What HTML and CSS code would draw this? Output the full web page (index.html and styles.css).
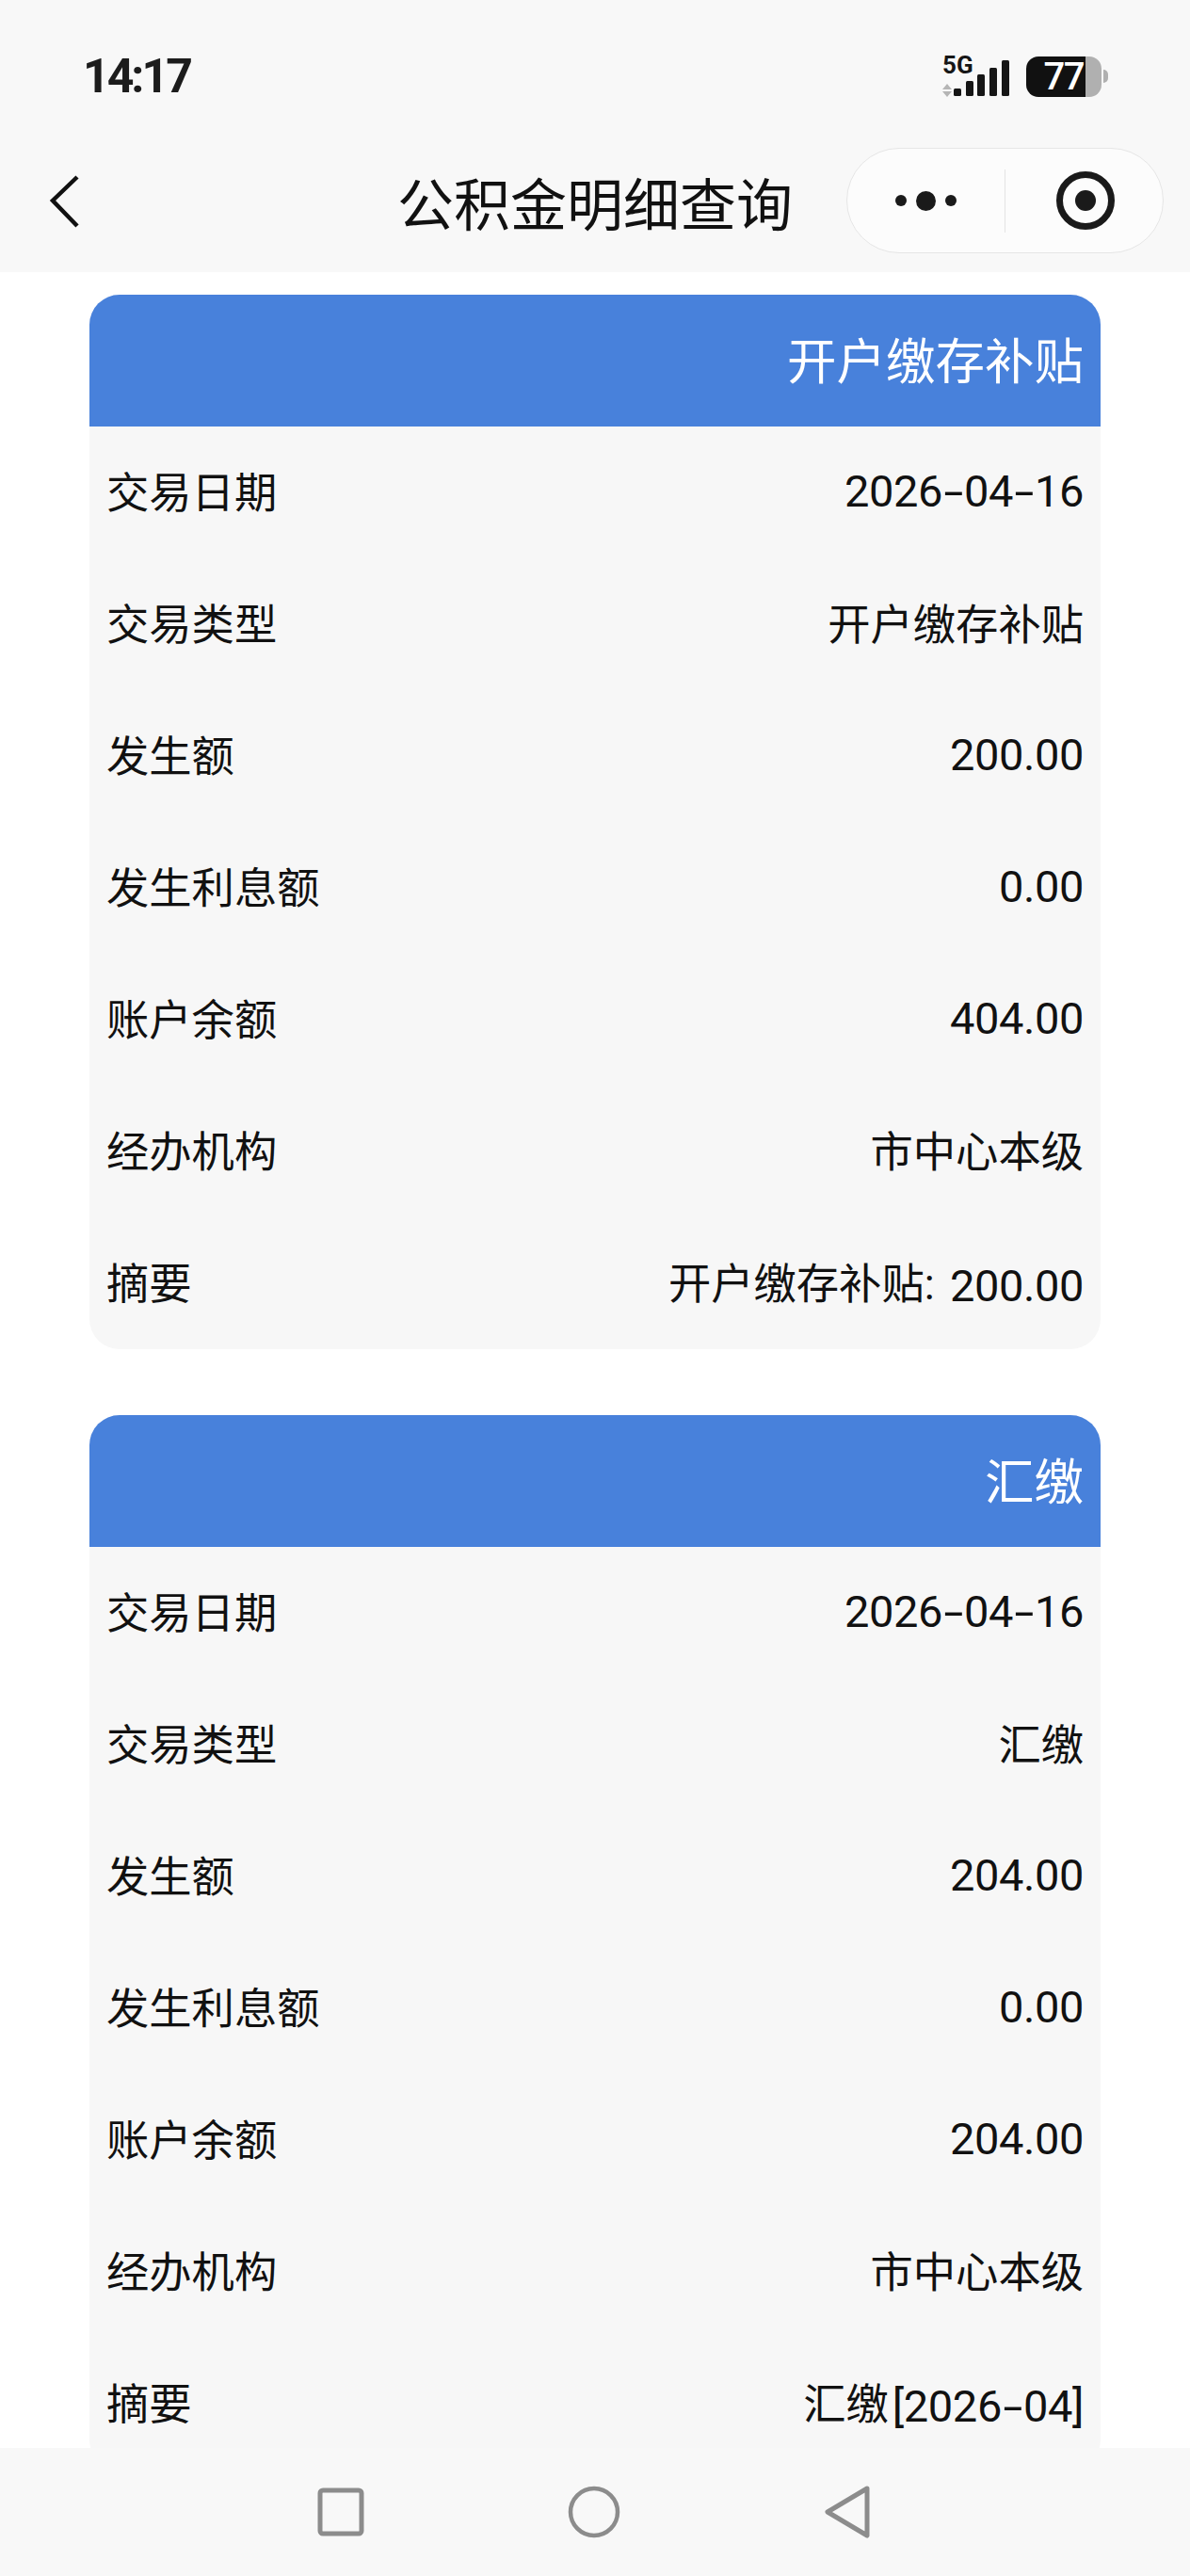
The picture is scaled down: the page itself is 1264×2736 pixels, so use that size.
FILE: index.html
```html
<!DOCTYPE html>
<html lang="zh-CN">
<head>
    <meta charset="UTF-8">
    <meta name="viewport" content="width=device-width, initial-scale=1.0">
    <title>公积金明细查询</title>
    <link rel="stylesheet" href="styles.css">
</head>
<body>
    <header class="top">
        <div class="status-bar">
            <span class="time">14:17</span>
            <div class="status-icons">
                <div class="signal">
                    <span class="net">5G</span>
                    <svg class="signal-svg" width="71" height="43" viewBox="0 0 71 43">
                        <path d="M0 35 5 29 10 35ZM0 37 5 43 10 37Z" fill="#b5b5b5"/>
                        <rect x="12" y="34" width="8" height="8" rx="1.500" fill="#161616"/>
                        <rect x="25" y="26" width="8" height="16" rx="1.500" fill="#161616"/>
                        <rect x="37" y="19" width="8" height="23" rx="1.500" fill="#161616"/>
                        <rect x="50" y="12" width="8" height="30" rx="1.500" fill="#161616"/>
                        <rect x="63" y="4" width="8" height="38" rx="1.500" fill="#161616"/>
                    </svg>
                </div>
                <div class="battery">
                    <div class="battery-body">
                        <span class="battery-level">77</span>
                    </div>
                    <span class="battery-cap"></span>
                </div>
            </div>
        </div>
        <nav class="nav-bar">
            <svg class="back" width="34" height="58" viewBox="0 0 34 58">
                <path d="M31 3 5 28 31 55" fill="none" stroke="#111" stroke-width="4.500"/>
            </svg>
            <h1 class="nav-title">公积金明细查询</h1>
            <div class="capsule">
                <div class="capsule-more">
                    <span class="dot"></span>
                    <span class="dot dot-big"></span>
                    <span class="dot"></span>
                </div>
                <div class="capsule-close">
                    <span class="target"></span>
                </div>
            </div>
        </nav>
    </header>

    <main class="content">
        <section class="card">
            <h2 class="card-title">开户缴存补贴</h2>
            <div class="row"><span>交易日期</span><span class="num">2026<span class="dash">-</span>04<span class="dash">-</span>16</span></div>
            <div class="row"><span>交易类型</span><span>开户缴存补贴</span></div>
            <div class="row"><span>发生额</span><span class="num">200.00</span></div>
            <div class="row"><span>发生利息额</span><span class="num">0.00</span></div>
            <div class="row"><span>账户余额</span><span class="num">404.00</span></div>
            <div class="row"><span>经办机构</span><span>市中心本级</span></div>
            <div class="row"><span>摘要</span><span class="note">开户缴存补贴: <span class="num">200.00</span></span></div>
        </section>

        <section class="card">
            <h2 class="card-title">汇缴</h2>
            <div class="row"><span>交易日期</span><span class="num">2026<span class="dash">-</span>04<span class="dash">-</span>16</span></div>
            <div class="row"><span>交易类型</span><span>汇缴</span></div>
            <div class="row"><span>发生额</span><span class="num">204.00</span></div>
            <div class="row"><span>发生利息额</span><span class="num">0.00</span></div>
            <div class="row"><span>账户余额</span><span class="num">204.00</span></div>
            <div class="row"><span>经办机构</span><span>市中心本级</span></div>
            <div class="row"><span>摘要</span><span>汇缴<span class="num num-bracket">[2026<span class="dash">-</span>04]</span></span></div>
        </section>
    </main>

    <footer class="sys-nav">
        <svg width="50" height="52" viewBox="0 0 50 52">
            <rect x="3" y="3" width="44" height="46" rx="3" fill="none" stroke="#8c8c8c" stroke-width="5"/>
        </svg>
        <svg width="56" height="56" viewBox="0 0 56 56">
            <circle cx="28" cy="28" r="25" fill="none" stroke="#8c8c8c" stroke-width="4.500"/>
        </svg>
        <svg width="50" height="58" viewBox="0 0 50 58">
            <path d="M46 4 4 29 46 54Z" fill="none" stroke="#8c8c8c" stroke-width="5" stroke-linejoin="round"/>
        </svg>
    </footer>
</body>
</html>
```

FILE: styles.css
```css
* {
    box-sizing: border-box;
}

html, body {
    margin: 0;
    padding: 0;
    height: 100%;
}

body {
    height: 2736px;
    display: flex;
    flex-direction: column;
    overflow: hidden;
    background: #fff;
    color: #111;
    font-family: "Roboto", "Noto Sans CJK SC", sans-serif;
}

.top {
    height: 289px;
    background: #f8f8f8;
    flex-shrink: 0;
}

.status-bar {
    height: 150px;
    padding: 12px 87px 0 88px;
    display: flex;
    justify-content: space-between;
    align-items: center;
}

.time {
    font-size: 50px;
    font-weight: 700;
    letter-spacing: -3px;
    color: #1c1c1c;
}

.status-icons {
    display: flex;
    align-items: center;
    gap: 18px;
}

.signal {
    position: relative;
    width: 71px;
    height: 43px;
}

.net {
    position: absolute;
    top: -3px;
    left: 0;
    font-size: 26px;
    line-height: 25px;
    font-weight: 700;
    color: #161616;
}

.signal-svg {
    display: block;
}

.battery {
    display: flex;
    align-items: center;
    gap: 2px;
}

.battery-body {
    width: 80px;
    height: 43px;
    border-radius: 13px;
    background: linear-gradient(to right, #111 0, #111 63px, #b0b0b0 63px);
    display: flex;
    justify-content: flex-end;
    align-items: center;
    padding-right: 19px;
}

.battery-level {
    font-size: 40px;
    line-height: 43px;
    font-weight: 500;
    letter-spacing: -1.500px;
    color: #fff;
}

.battery-cap {
    width: 5px;
    height: 14px;
    border-radius: 0 7px 7px 0;
    background: #b0b0b0;
}

.nav-bar {
    position: relative;
    height: 139px;
    display: flex;
    align-items: center;
    justify-content: center;
}

.back {
    position: absolute;
    left: 51px;
    top: 35px;
}

.nav-title {
    margin: -12px 0 0;
    font-size: 60px;
    font-weight: 400;
    color: #111;
}

.capsule {
    position: absolute;
    left: 899px;
    top: 7px;
    width: 337px;
    height: 112px;
    border: 1px solid #e6e6e6;
    border-radius: 56px;
    background: #fcfcfc;
    display: flex;
    align-items: center;
}

.capsule-more {
    width: 168px;
    height: 67px;
    display: flex;
    align-items: center;
    justify-content: center;
    gap: 10px;
    border-right: 1px solid #e4e4e4;
}

.dot {
    width: 12px;
    height: 12px;
    border-radius: 50%;
    background: #1a1a1a;
}

.dot-big {
    width: 21px;
    height: 21px;
}

.capsule-close {
    flex: 1;
    display: flex;
    justify-content: center;
    padding-left: 3px;
}

.target {
    width: 62px;
    height: 62px;
    border: 7px solid #1a1a1a;
    border-radius: 50%;
    display: flex;
    align-items: center;
    justify-content: center;
}

.target::after {
    content: "";
    width: 22px;
    height: 22px;
    border-radius: 50%;
    background: #1a1a1a;
}

.content {
    flex: 1;
    min-height: 0;
    overflow: hidden;
    padding: 24px 95px 0;
}

.card {
    margin-bottom: 70px;
    border-radius: 32px;
    overflow: hidden;
    background: #f7f7f7;
}

.card-title {
    margin: 0;
    height: 140px;
    padding: 0 18px 6px;
    display: flex;
    align-items: center;
    justify-content: flex-end;
    background: #4881db;
    color: #fff;
    font-size: 52.500px;
    font-weight: 400;
}

.row {
    height: 140px;
    padding: 0 18px 6px;
    display: flex;
    align-items: center;
    justify-content: space-between;
    font-size: 45.300px;
    color: #111;
}

/* digits in the reference are taller and narrower than Roboto */
.num {
    font-size: 47px;
    line-height: 50px;
    letter-spacing: -0.400px;
    position: relative;
    top: 2px;
}

.note {
    word-spacing: 5px;
}

.num-bracket {
    margin-left: 4px;
}

.dash {
    display: inline-block;
    width: 23px;
    text-align: center;
    transform: scaleX(1.6);
}

.sys-nav {
    height: 136px;
    flex-shrink: 0;
    background: #f8f8f8;
    display: flex;
    align-items: center;
    padding: 0 0 0 337px;
    gap: 216px;
}
```
